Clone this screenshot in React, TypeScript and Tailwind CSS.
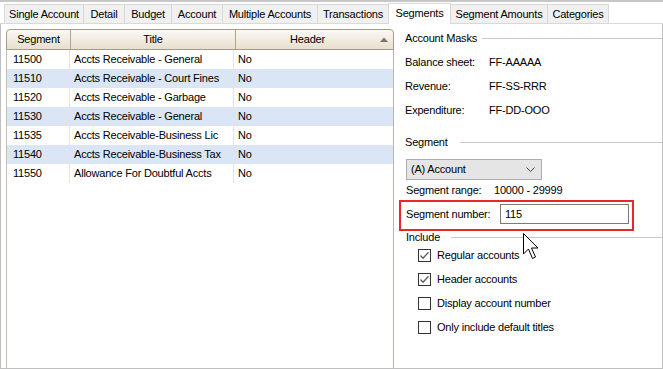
import React from "react";

const tabs = [
  { label: "Single Account", w: "w-[79px]" },
  { label: "Detail", w: "w-[41px]" },
  { label: "Budget", w: "w-[47px]" },
  { label: "Account", w: "w-[51px]" },
  { label: "Multiple Accounts", w: "w-[95px]" },
  { label: "Transactions", w: "w-[71px]" },
  { label: "Segments", w: "w-[63px]", active: true },
  { label: "Segment Amounts", w: "w-[96px]" },
  { label: "Categories", w: "w-[62px]", last: true },
];

const rows = [
  ["11500", "Accts Receivable - General", "No"],
  ["11510", "Accts Receivable - Court Fines", "No"],
  ["11520", "Accts Receivable - Garbage", "No"],
  ["11530", "Accts Receivable - General", "No"],
  ["11535", "Accts Receivable-Business Lic", "No"],
  ["11540", "Accts Receivable-Business Tax", "No"],
  ["11550", "Allowance For Doubtful Accts", "No"],
];

const checks = [
  { label: "Regular accounts", on: true },
  { label: "Header accounts", on: true },
  { label: "Display account number", on: false },
  { label: "Only include default titles", on: false },
];

function GroupTitle({ label, w, className }: { label: string; w: string; className?: string }) {
  return (
    <div className={`flex items-center ${className ?? ""}`}>
      <span className={`${w} shrink-0`}>{label}</span>
      <div className="flex-1 h-px bg-[#c9c9c9]" />
    </div>
  );
}

function CheckBox({ on }: { on: boolean }) {
  return (
    <div className="w-[13px] h-[13px] shrink-0 border border-[#333] bg-white flex items-center justify-center">
      {on && (
        <svg width="11" height="11" viewBox="0 0 11 11">
          <polyline points="1.5,5.5 4,8.2 9.5,2.2" fill="none" stroke="#5b5b5b" strokeWidth="1.3" />
        </svg>
      )}
    </div>
  );
}

export default function App() {
  return (
    <div className="relative w-[663px] h-[369px] bg-white flex flex-col border-t-2 border-[#c6c6c6] text-[11px] tracking-[-0.2px] text-black font-['Liberation_Sans',Arial,sans-serif] overflow-hidden">
      {/* Tab strip */}
      <div className="flex items-end h-[22px] pl-1 border-b border-[#d9d9d9]">
        {tabs.map((t) =>
          t.active ? (
            <div
              key={t.label}
              className={`${t.w} h-[21px] -mb-px relative z-10 bg-white border-x border-t border-[#d9d9d9] flex items-center justify-center pb-[2px]`}
            >
              {t.label}
            </div>
          ) : (
            <div
              key={t.label}
              className={`${t.w} h-[19px] bg-[#f0f0f0] border-t border-[#d9d9d9] ${
                t.label === "Segment Amounts" ? "" : "border-l"
              } ${t.last ? "border-r" : ""} flex items-center justify-center pt-px`}
            >
              {t.label}
            </div>
          )
        )}
      </div>

      {/* Panel */}
      <div className="flex h-[345px] border-x border-b border-[#bfbfbf]">
        {/* Grid */}
        <div className="pl-[5px] pt-[5px] flex">
          <div className="w-[388px] flex flex-col">
            <div className="relative h-[21px] flex rounded-t-[4px] border border-[#a89a88] bg-linear-to-b from-[#fbf9f5] to-[#e7dfcf]">
              <div className="w-[64px] border-r border-[#b3a390] flex items-center justify-center">Segment</div>
              <div className="w-[165px] border-r border-[#b3a390] flex items-center justify-center">Title</div>
              <div className="flex-1 flex items-center justify-center pr-[14px]">Header</div>
              <svg className="absolute right-[5px] top-[7px]" width="8" height="5" viewBox="0 0 8 5">
                <polygon points="0,5 4,0.5 8,5" fill="#7c7266" />
              </svg>
            </div>
            <div className="flex-1 border-x border-[#c8bdaf] border-r-[#b9b5ae]">
              {rows.map((r, i) => (
                <div key={i} className={`flex h-[19px] ${i % 2 === 1 ? "bg-[#dae5f5]" : "bg-white"}`}>
                  <div className="w-[63px] border-r border-[#ebe3d6] pl-[6px] flex items-center">{r[0]}</div>
                  <div className="w-[164px] border-r border-[#ebe3d6] pl-[4px] flex items-center">{r[1]}</div>
                  <div className="flex-1 pl-[4px] flex items-center">{r[2]}</div>
                </div>
              ))}
            </div>
          </div>
        </div>

        {/* Right side */}
        <div className="w-[268px] flex flex-col pl-[11px]">
          <GroupTitle label="Account Masks" w="w-[77px]" className="h-[24px] mt-[2px]" />
          <div className="flex items-center h-[24px]">
            <span className="w-[84px]">Balance sheet:</span>
            <span>FF-AAAAA</span>
          </div>
          <div className="flex items-center h-[24px]">
            <span className="w-[84px]">Revenue:</span>
            <span>FF-SS-RRR</span>
          </div>
          <div className="flex items-center h-[24px]">
            <span className="w-[84px]">Expenditure:</span>
            <span>FF-DD-OOO</span>
          </div>

          <GroupTitle label="Segment" w="w-[55px]" className="h-[24px] mt-[8px]" />
          <div className="mt-[5px] ml-px w-[136px] h-[21px] flex items-center justify-between pl-[4px] pr-[6px] bg-[#e5e5e5] border border-[#acacac]">
            <span>(A) Account</span>
            <svg width="9" height="5" viewBox="0 0 9 5">
              <polyline points="0.5,0.5 4.5,4.5 8.5,0.5" fill="none" stroke="#444" strokeWidth="1" />
            </svg>
          </div>
          <div className="flex items-center h-[20px] ml-px">
            <span className="w-[88px]">Segment range:</span>
            <span>10000 - 29999</span>
          </div>
          <div className="-ml-[6px] w-[235px] h-[31px] border-2 border-[#e8262b] flex items-start pt-[2px] pl-[5px]">
            <span className="w-[94px] h-[20px] flex items-center">Segment number:</span>
            <div className="w-[129px] h-[20px] border border-[#7a7a7a] flex items-center pl-[4px]">115</div>
          </div>

          <GroupTitle label="Include" w="w-[45px]" className="h-[12px] ml-px" />
          <div className="flex flex-col">
            {checks.map((c) => (
              <div key={c.label} className="flex items-center gap-[6px] h-[24px] pl-[13px]">
                <CheckBox on={c.on} />
                <span>{c.label}</span>
              </div>
            ))}
          </div>
        </div>
      </div>

      {/* Mouse cursor */}
      <svg className="absolute left-[523px] top-[231px]" width="16" height="27" viewBox="0 0 16 27">
        <polygon
          points="0.5,0.5 0.5,21 5.5,16 9.5,25.5 12.5,24 8.5,15 15,15"
          fill="#fff"
          stroke="#000"
          strokeWidth="1"
          strokeLinejoin="miter"
        />
      </svg>
    </div>
  );
}
